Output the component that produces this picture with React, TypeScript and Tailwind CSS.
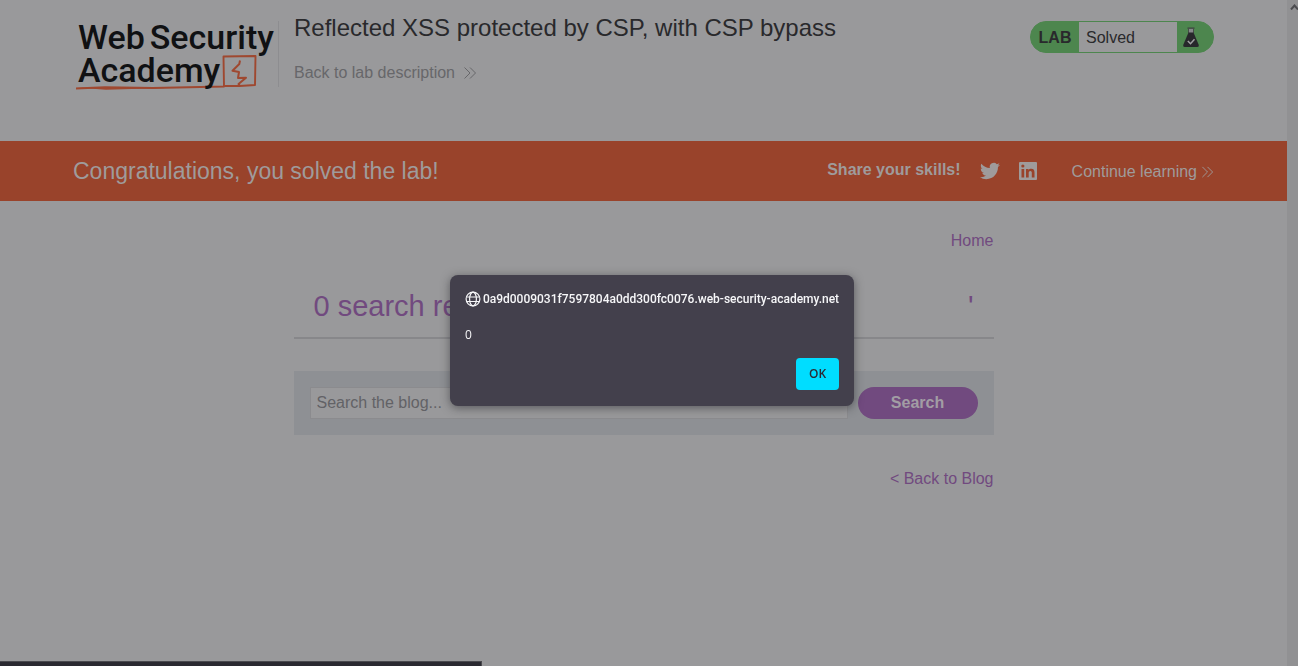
import React from "react";

function Chevrons({ className }: { className: string }) {
  return (
    <svg viewBox="0 0 14 14" className={className} fill="none" stroke="currentColor" strokeWidth="1" aria-hidden="true">
      <path d="M1.500 1.500 7 7l-5.500 5.500M7 1.500 12.500 7 7 12.500" />
    </svg>
  );
}

function Logo() {
  return (
    <a href="#academy" className="relative block w-[206px] shrink-0 border-r border-[#8d8d90] font-['Roboto',sans-serif] text-[34px] leading-[33px] font-medium text-[#101113]">
      <svg viewBox="0 0 200 76" className="absolute top-0 left-[2px] h-[76px] w-[200px]" fill="none" aria-hidden="true">
        <path d="M1 67.500 30 66.300 78 67l71-1.500-.5-30 32-.5-.5 29-15.500 1-15-.3" stroke="#9f4830" strokeWidth="1.900" strokeLinejoin="round" />
        <path d="M1 66.500h30l60 .5-60 1.800z" fill="#9f4830" />
        <path d="m165 39.500-.7 3.500-6.800 6.800 6.500 1.200-1 6 8-.2-7.500 6.200 1.300 1" stroke="#9f4830" strokeWidth="2" strokeLinejoin="round" />
      </svg>
      <span className="relative flex gap-[5px] pl-[5px]">
        <span>Web</span>
        <span>Security</span>
      </span>
      <span className="relative block pl-[5px]">Academy</span>
    </a>
  );
}

function LabStatus() {
  return (
    <div className="flex h-8 w-[184px] shrink-0 overflow-hidden rounded-full border border-[#4d864e] bg-[#4d864e] text-[#29292c]">
      <span className="flex w-12 items-center justify-center pt-px font-bold">LAB</span>
      <span className="flex flex-1 items-center bg-[#99999b] pt-px pl-[7px]">Solved</span>
      <span className="flex w-9 items-center pl-[5px]">
        <svg viewBox="0 0 18 22" className="h-[22px] w-[18px]" aria-hidden="true">
          <path d="M6.500 2.500h5V8h-5z" fill="#858789" />
          <path d="M5.500 1.500h7v1.200h-7z" fill="#3c403e" />
          <path d="M6.500 3v4M11.500 3v4" stroke="#3c403e" strokeWidth=".8" />
          <path d="M6.500 6.500h5l5.300 12.500q.5 2-1.500 2H2.700q-2 0-1.500-2z" fill="#27272b" />
          <path d="m5.800 15 2.700 2.700 4-4.500" fill="none" stroke="#a0a0a2" strokeWidth="1.500" />
        </svg>
      </span>
    </div>
  );
}

function AlertDialog() {
  return (
    <div className="fixed inset-0 flex items-start justify-center pt-[275px] pl-[6px]">
      <div
        role="alertdialog"
        aria-labelledby="alert-origin"
        className="rounded-lg bg-[#43404c] px-[15px] py-4 font-['Open_Sans','Noto_Sans',sans-serif] text-xs text-[#f6f6f8] shadow-[0_2px_10px_rgba(28,27,34,0.5)]"
      >
        <div className="flex items-center gap-[2px]">
          <svg viewBox="0 0 16 16" className="h-4 w-4 shrink-0" fill="none" stroke="currentColor" strokeWidth="1.200" aria-hidden="true">
            <circle cx="8" cy="8" r="6.900" />
            <ellipse cx="8" cy="8" rx="3.400" ry="6.900" />
            <path d="M1.500 6h13M1.500 10.500h13" />
          </svg>
          <h2 id="alert-origin" className="font-['Roboto',sans-serif] leading-4 font-medium whitespace-nowrap">
            0a9d0009031f7597804a0dd300fc0076.web-security-academy.net
          </h2>
        </div>
        <p className="mt-5 leading-4">0</p>
        <div className="mt-[15px] flex justify-end">
          <button type="button" className="h-8 w-[43px] rounded bg-[#00ddff] font-semibold text-[#2b2a33]">
            OK
          </button>
        </div>
      </div>
    </div>
  );
}

export default function App() {
  return (
    <div className="flex min-h-screen bg-[#99999b] font-['Liberation_Sans',Arial,sans-serif] text-base text-[#29292c]">
      <div className="min-w-0 flex-1">
        <header className="flex h-[141px] items-start px-[73px] pt-[21px]">
          <Logo />
          <div className="-mt-[9px] ml-[15px] flex-1">
            <h1 className="text-2xl leading-8">Reflected XSS protected by CSP, with CSP bypass</h1>
            <a href="#lab" className="mt-[17px] inline-flex items-center gap-2 leading-6 text-[#67676a]">
              Back to lab description
              <Chevrons className="h-[14px] w-[14px]" />
            </a>
          </div>
          <LabStatus />
        </header>

        <section className="flex h-[60px] items-center bg-[#99432b] px-[73px] text-[#9f9b9b]">
          <h2 className="flex-1 text-[23px]">Congratulations, you solved the lab!</h2>
          <span className="pb-[2px] font-bold">Share your skills!</span>
          <a href="#twitter" aria-label="Twitter" className="ml-[19px]">
            <svg viewBox="0 0 24 24" className="h-5 w-5" fill="currentColor" aria-hidden="true">
              <path d="M23.950 4.570a10 10 0 0 1-2.820.77 4.960 4.960 0 0 0 2.160-2.720c-.95.550-2 .950-3.130 1.180a4.920 4.920 0 0 0-8.380 4.480C7.690 8.100 4.070 6.130 1.640 3.160a4.820 4.820 0 0 0-.670 2.480c0 1.710.870 3.210 2.190 4.100a4.900 4.900 0 0 1-2.230-.62v.06a4.920 4.920 0 0 0 3.950 4.830 5 5 0 0 1-2.210.08 4.940 4.940 0 0 0 4.600 3.420A9.870 9.870 0 0 1 0 19.540a13.990 13.990 0 0 0 7.550 2.210c9.050 0 14-7.500 14-13.980 0-.21 0-.42-.02-.63a9.940 9.940 0 0 0 2.420-2.570z" />
            </svg>
          </a>
          <a href="#linkedin" aria-label="LinkedIn" className="ml-[18px]">
            <svg viewBox="0 0 20 20" className="h-5 w-5" aria-hidden="true">
              <rect x="1" y="1" width="18" height="18" rx="1" fill="currentColor" />
              <path d="M3.500 8h2.700v8.500H3.500zM8 8h2.500v1.200c.5-.9 1.500-1.400 2.700-1.400 2.600 0 3.300 1.600 3.300 4v4.700h-2.700v-4.200c0-1.200-.2-2.200-1.500-2.200s-1.600 1-1.600 2.200v4.200H8z" fill="#99432b" />
              <circle cx="4.850" cy="5" r="1.600" fill="#99432b" />
            </svg>
          </a>
          <a href="#continue" className="ml-[34px] flex items-center gap-1 pt-px">
            Continue learning
            <Chevrons className="h-[14px] w-[13px]" />
          </a>
        </section>

        <main className="mx-auto w-[700px] max-w-full text-[#714a7f]">
          <nav className="flex justify-end pt-7 leading-6">
            <a href="#home">Home</a>
          </nav>
          <h2 className="mt-[22px] flex h-16 items-center justify-between border-b-2 border-[#87878a] px-5 pt-px text-[29px]">
            <span>0 search results for '</span>
            <span>'</span>
          </h2>
          <form className="mt-8 flex h-16 items-center gap-[10px] bg-[#8e9094] px-4" onSubmit={(e) => e.preventDefault()}>
            <input
              type="text"
              aria-label="Search the blog"
              placeholder="Search the blog..."
              className="h-8 min-w-0 flex-1 border border-[#8b8b8e] bg-[#99999b] px-1.5 text-[#29292c] placeholder:text-[#626266]"
            />
            <button type="submit" className="h-8 w-[120px] rounded-full bg-[#714a7f] font-bold text-[#a29da4]">
              Search
            </button>
          </form>
          <div className="mt-8 flex justify-end leading-6">
            <a href="#blog">&lt; Back to Blog</a>
          </div>
        </main>
      </div>

      <div className="flex w-[11px] shrink-0 justify-end bg-[#919193] pt-1" aria-hidden="true">
        <svg viewBox="0 0 8 6" className="h-[6px] w-2" fill="none" stroke="#4c4c50" strokeWidth="2">
          <path d="M1 5.500 4.500 1.500 8 5.500" />
        </svg>
      </div>

      <div className="fixed bottom-0 left-0 h-[5px] w-[482px] border-t border-r border-[#4a4a4e] bg-[#2a2930]" />
      <AlertDialog />
    </div>
  );
}
